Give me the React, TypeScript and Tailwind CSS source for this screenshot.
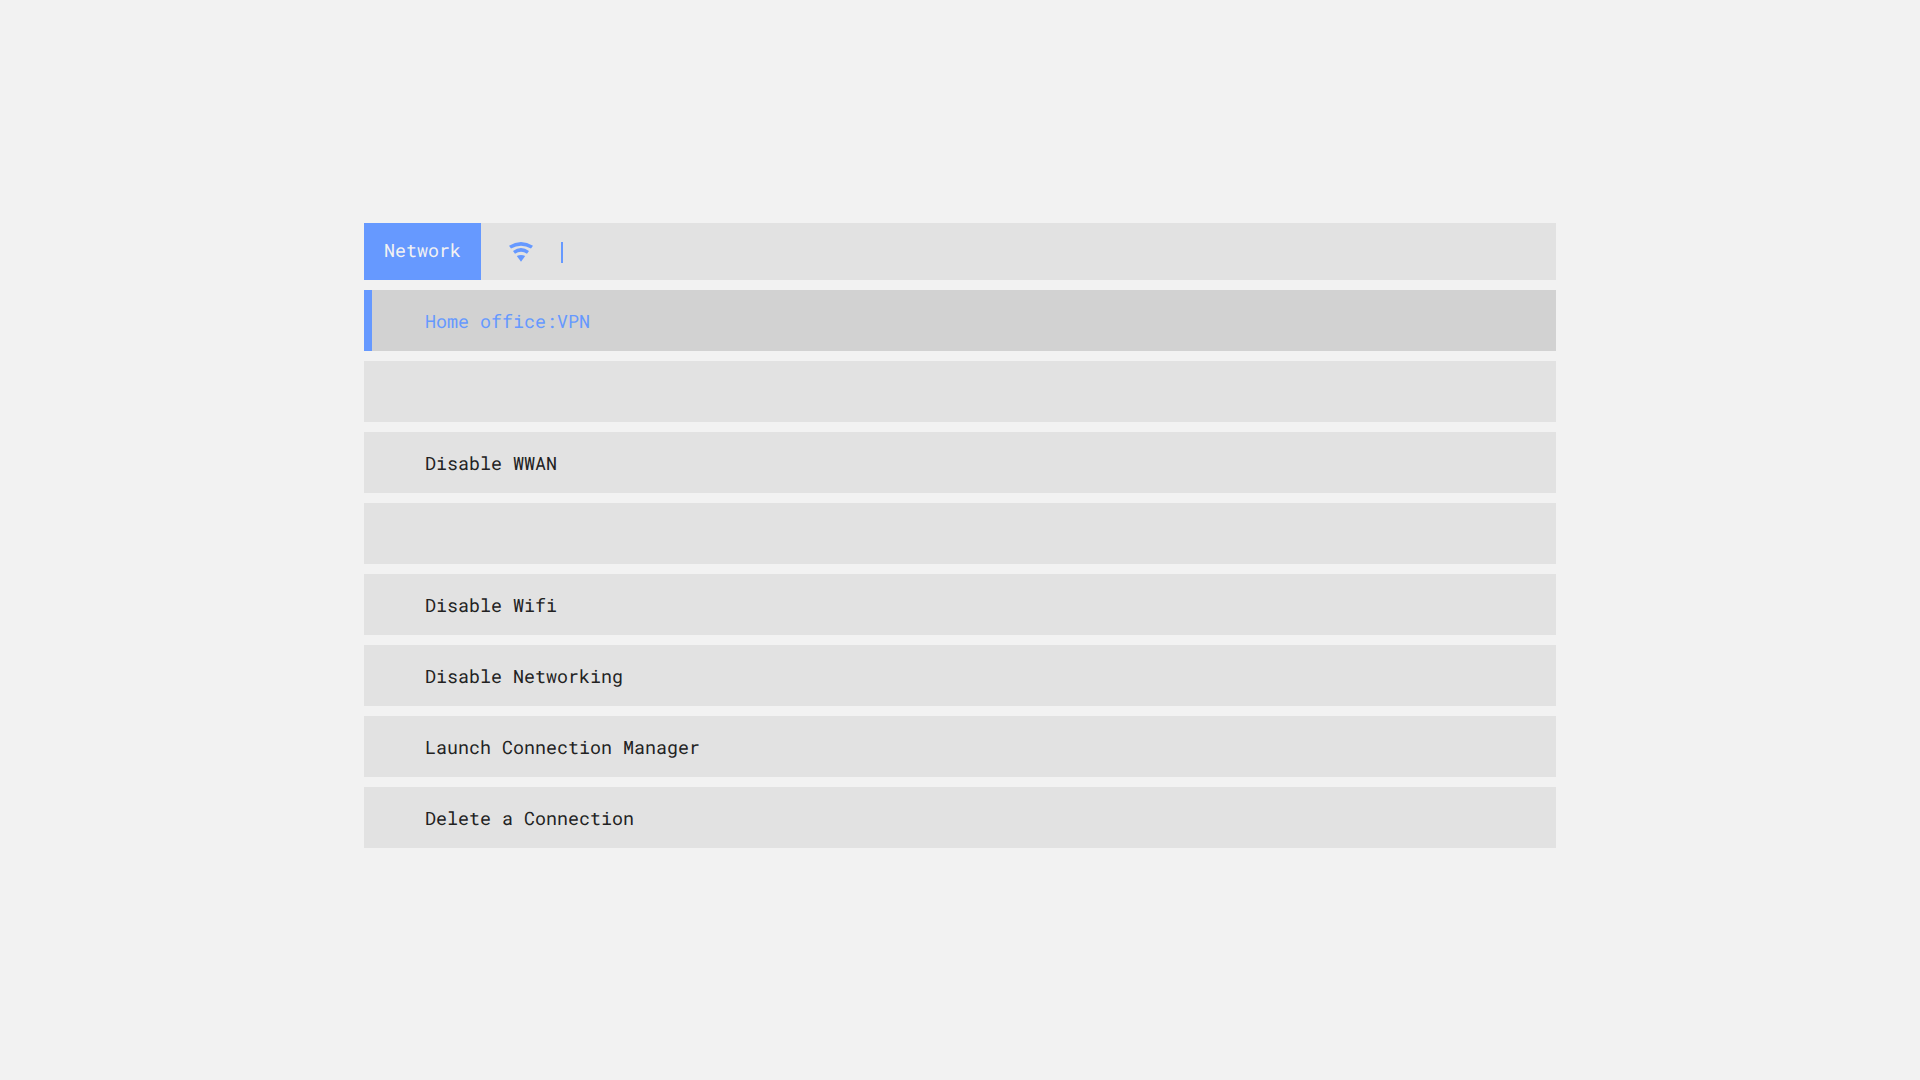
const rows = [
  { label: 'Home office:VPN', active: true },
  { label: '' },
  { label: 'Disable WWAN' },
  { label: '' },
  { label: 'Disable Wifi' },
  { label: 'Disable Networking' },
  { label: 'Launch Connection Manager' },
  { label: 'Delete a Connection' },
];

export default function App() {
  return (
    <div className="min-h-screen bg-[#f2f2f2] pt-[223px] font-['Roboto_Mono','Liberation_Mono',monospace] text-[18.33px] [text-rendering:geometricPrecision]">
      <div className="mx-auto flex w-[1192px] flex-col gap-[10px]">
        {/* Prompt bar */}
        <div className="flex h-[57px] items-center bg-[#e2e2e2]">
          <div className="flex h-full w-[117px] items-center justify-center bg-[#6699ff] pb-[1px] text-[#f2f2f2]">Network</div>
          <svg className="ml-[27px]" width="26" height="26" viewBox="0 0 26 26" fill="#6699ff">
            <path d="M1 6.8 Q13 -0.6 25 6.8 L23 9.4 Q13 4 3 9.4 Z" />
            <path d="M5 12 Q13 6.2 21 12 L19 14.8 Q13 10.6 7 14.8 Z" />
            <path d="M8.8 17 Q13 14.8 17.2 17 L13 22.8 Z" />
          </svg>
          <div className="ml-[27px] mt-[2px] h-[21px] w-[2px] bg-[#6699ff]" />
        </div>

        {rows.map((row, i) => (
          <div
            key={i}
            className={
              row.active
                ? 'flex h-[61px] items-center border-l-[8px] border-[#6699ff] bg-[#d2d2d2] pl-[53px] pt-[2px] text-[#6699ff]'
                : 'flex h-[61px] items-center bg-[#e2e2e2] pl-[61px] pt-[2px] text-[#222222]'
            }
          >
            {row.label}
          </div>
        ))}
      </div>
    </div>
  );
}
